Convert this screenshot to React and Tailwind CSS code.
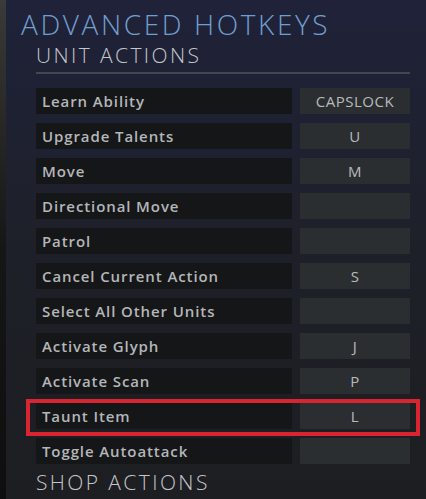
import React from 'react';

// Advanced hotkeys panel
const rows = [
    { label: 'Learn Ability', key: 'CAPSLOCK' },
    { label: 'Upgrade Talents', key: 'U' },
    { label: 'Move', key: 'M' },
    { label: 'Directional Move', key: '' },
    { label: 'Patrol', key: '' },
    { label: 'Cancel Current Action', key: 'S' },
    { label: 'Select All Other Units', key: '' },
    { label: 'Activate Glyph', key: 'J' },
    { label: 'Activate Scan', key: 'P' },
    { label: 'Taunt Item', key: 'L', highlight: true },
    { label: 'Toggle Autoattack', key: '' },
];

function HotkeyRow({ label, hotkey, highlight }) {
    return (
        <div className="relative flex gap-[8px] h-[26px]">
            <div className="w-[256px] bg-[#151618] flex items-center pl-[6px] text-[15px] font-semibold tracking-[0.9px] text-[#b4b6b8]">
                {label}
            </div>
            <div className="w-[110px] bg-[#2b2e30] flex items-center justify-center text-[15px] font-medium tracking-[0.5px] text-[#b8babc]">
                {hotkey}
            </div>
            {highlight && (
                <div className="absolute left-[-10px] right-[-10px] top-[-4px] bottom-[-7px] border-[4px] border-[#d9252f]"></div>
            )}
        </div>
    );
}

export default function App() {
    return (
        <div
            className="w-[426px] h-[499px] flex overflow-hidden bg-[#121212]"
            style={{ fontFamily: '"Open Sans", "Liberation Sans", sans-serif' }}
        >
            {/* left edge */}
            <div className="w-[6px] bg-gradient-to-b from-[#3a3a38] via-[#161616] to-[#0e0e0e]"></div>

            <div className="flex-1 flex flex-col bg-gradient-to-b from-[#1f2239] via-[#1e2029] to-[#1d1e21]">
                <h1 className="pl-[15px] pt-[9px] text-[28px] leading-[30px] font-light tracking-[2.6px] text-[#6f9fcf]">
                    ADVANCED HOTKEYS
                </h1>

                <div className="pl-[30px] pr-[16px] flex flex-col">
                    <h2 className="pt-[4px] text-[21px] leading-[24px] font-light tracking-[2.4px] text-[#c4c6ca]">
                        UNIT ACTIONS
                    </h2>
                    <div className="mt-[5px] h-[2px] bg-[#45464f]"></div>

                    <div className="mt-[14px] flex flex-col gap-[9px]">
                        {rows.map((r) => (
                            <HotkeyRow key={r.label} label={r.label} hotkey={r.key} highlight={r.highlight} />
                        ))}
                    </div>

                    <h2 className="pt-[6px] text-[21px] leading-[24px] font-light tracking-[2.4px] text-[#c4c6ca]">
                        SHOP ACTIONS
                    </h2>
                </div>
            </div>
        </div>
    );
}
